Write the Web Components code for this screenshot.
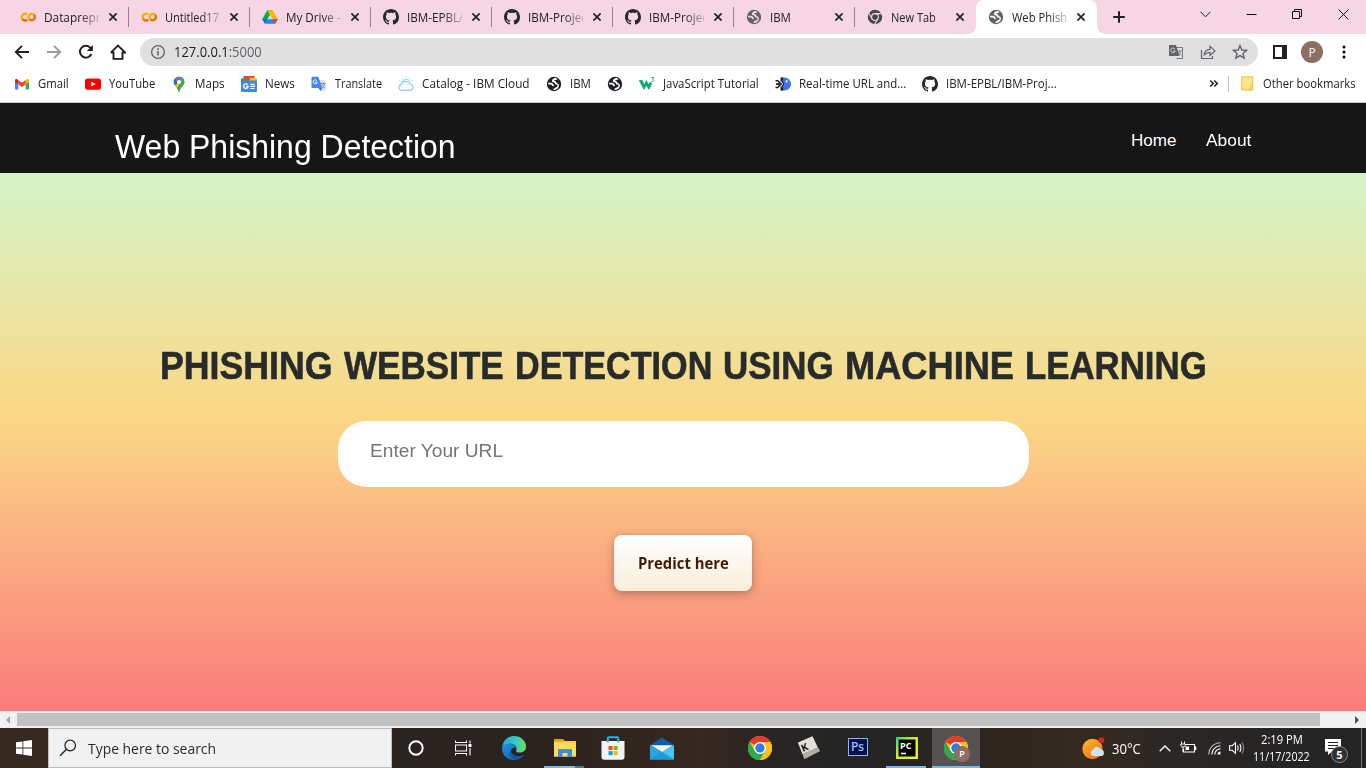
<!DOCTYPE html>
<html lang="en">
<head>
<meta charset="utf-8">
<title>Web Phishing Detection</title>
<style>
html,body{margin:0;height:100%;overflow:hidden}
body{font-family:"Open Sans","Noto Sans",sans-serif;font-size:12px;color:#202124;background:#fff}
</style>
</head>
<body>
<desktop-screen></desktop-screen>
<script>
const chromeLogo = `<circle cx="12" cy="12" r="12" fill="#fbc116"/><path d="M12 12L1.6 6A12 12 0 0 1 22.4 6z" fill="#e33b2e"/><path d="M1.6 6A12 12 0 0 0 12 24L17.2 15 12 12 6.8 15z" fill="#2da94f"/><path d="M22.4 6A12 12 0 0 1 12 24L17.2 15 12 6z" fill="#fbc116"/><circle cx="12" cy="12" r="6" fill="#fff"/><circle cx="12" cy="12" r="4.7" fill="#2f7de9"/>`;
const globe = c => `<circle cx="8" cy="8" r="7.200" fill="${c}"/><path d="M9.800 1.800C7.600 2 5.600 3.700 5.900 5.200 6.200 6.500 7.900 6 8.600 6.700 9.200 7.500 8.600 8.300 9.600 8.500 11 8.600 11.800 8.900 11.500 10 11 11.500 8.500 11.500 7 13.600L8.300 14.100C11 13.500 12.300 12 12.900 10.200 13.200 8.500 12.300 7.400 11 7.200 10.200 6.800 10.600 6 9.800 5.400 9.200 5 8.100 5 8.200 4.500 8.500 3.800 10.300 3.900 11.500 3.400z" fill="var(--hole,#fff)"/><path d="M2.200 7.600H4.800C6.300 7.800 7.100 8.900 6.900 10.100" fill="none" stroke="var(--hole,#fff)" stroke-width="1.800"/>`;
const ICONS = {
colab:['0 0 16 16',`<g fill="none" stroke-width="2.2"><path d="M7.2 5.4A3.3 3.3 0 1 0 7.2 10.6" stroke="#f9ab00"/><circle cx="11.7" cy="8" r="3.2" stroke="#f9ab00"/><path d="M9.4 10.3A3.2 3.2 0 0 0 14 5.7" stroke="#e8710a"/><path d="M2.2 10.2A3.3 3.3 0 0 0 7.2 10.6" stroke="#e8710a"/></g>`],
drive:['0 0 16 16',`<path d="M5.4 1.3h5.2L8 5.8z" fill="#188038"/><path d="M5.4 1.3L8 5.8 3 14.4.2 10.3z" fill="#00ac47"/><path d="M10.6 1.3l5.2 9h-5.2L5.4 1.3z" fill="#ffba00"/><path d="M5.4 10.3h10.4L13 14.7H3z" fill="#2684fc"/><path d="M.2 10.3h5.2L3 14.7z" fill="#1967d2"/><path d="M10.6 10.3h5.2L13 14.7z" fill="#ea4335"/>`],
github:['0 0 16 16',`<path fill="#24292f" d="M8 0C3.58 0 0 3.58 0 8c0 3.54 2.29 6.53 5.47 7.59.4.07.55-.17.55-.38 0-.19-.01-.82-.01-1.49-2.01.37-2.53-.49-2.69-.94-.09-.23-.48-.94-.82-1.13-.28-.15-.68-.52-.01-.53.63-.01 1.08.58 1.23.82.72 1.21 1.87.87 2.33.66.07-.52.28-.87.51-1.07-1.78-.2-3.64-.89-3.64-3.95 0-.87.31-1.59.82-2.15-.08-.2-.36-1.02.08-2.12 0 0 .67-.21 2.2.82.64-.18 1.32-.27 2-.27.68 0 1.36.09 2 .27 1.53-1.04 2.2-.82 2.2-.82.44 1.1.16 1.92.08 2.12.51.56.82 1.27.82 2.15 0 3.07-1.87 3.75-3.65 3.95.29.25.54.73.54 1.48 0 1.07-.01 1.93-.01 2.2 0 .21.15.46.55.38A8.012 8.012 0 0 0 16 8c0-4.42-3.58-8-8-8z"/>`],
globe:['0 0 16 16',globe('#5f6368')],
globedark:['0 0 16 16',globe('#202124')],
newtab:['0 0 16 16',`<circle cx="8" cy="8" r="7.200" fill="#44474c"/><g stroke="#f6d5e4" stroke-width="1.100" fill="none"><circle cx="8" cy="8" r="3.400"/><path d="M8 4.600H14.400M5.100 9.800L1.800 4.300M11 9.700L7.600 15.200"/></g>`],
close:['0 0 8 8',`<path d="M.4.4l7.2 7.2M7.6.4L.4 7.6" stroke="#202124" stroke-width="1.700"/>`],
plus:['0 0 12 12',`<path d="M6 .2v11.6M.2 6h11.6" stroke="#202124" stroke-width="2"/>`],
chev:['0 0 11 11',`<path d="M.5 2.8l5 5 5-5" fill="none" stroke="#202124" stroke-width="1"/>`],
min:['0 0 11 11',`<path d="M.5 5.5h10" stroke="#111"/>`],
restore:['0 0 11 11',`<path d="M.5 2.5h7v7h-7zM2.5 2.5V.5h7v7h-2" fill="none" stroke="#111"/>`],
wclose:['0 0 11 11',`<path d="M.5.5l10 10M10.500.5l-10 10" stroke="#111"/>`],
back:['0 0 16 16',`<path d="M15 8H2M8 1.800L1.800 8 8 14.200" fill="none" stroke="#202124" stroke-width="1.900"/>`],
fwd:['0 0 16 16',`<path d="M1 8h13M8 1.800L14.200 8 8 14.200" fill="none" stroke="#9b9da0" stroke-width="1.900"/>`],
reload:['0 0 16 16',`<path d="M13.300 10A5.900 5.900 0 1 1 12.600 4.200" fill="none" stroke="#202124" stroke-width="2"/><path d="M14.900 1v6H8.900z" fill="#202124"/>`],
home:['0 0 16 16',`<path d="M3.500 7.500V14.900H12.500V7.500M.8 8.600L8 1.500 15.200 8.600H12.500M.8 8.600H3.500" fill="none" stroke="#202124" stroke-width="1.900"/>`],
info:['0 0 16 16',`<circle cx="8" cy="8" r="6.400" fill="none" stroke="#5f6368" stroke-width="1.300"/><path d="M8 7v4.600M8 4.300v1.600" stroke="#5f6368" stroke-width="1.600"/>`],
gtrans:['0 0 16 16',`<path d="M6.500 3.500H14.500V14.500H8.500" fill="#e0e0e0" stroke="#777a7e"/><path d="M1 1h7l3.500 11H1z" fill="#5f6368"/><path d="M7 5.100A2.300 2.300 0 1 0 7.200 7H5.200" fill="none" stroke="#e0e0e0"/><path d="M9.500 7h4.500M11.500 6v1M13 7.200C12.500 9 11.500 10 10.500 11M10.500 8c.5 1.400 1.800 2.500 3 3.300" stroke="#777a7e" fill="none" stroke-width=".9"/>`],
share:['0 0 16 16',`<path d="M1.500 6V14.500H12.500V12M4.200 10.800C4.600 7.400 6.600 5.600 10 5.400V2.300L15 6.900 10 11.300V8.300C7.500 8.300 5.800 9.100 4.200 10.800z" fill="none" stroke="#5f6368" stroke-width="1.200"/>`],
star:['0 0 16 16',`<path d="M8 1.700L9.900 6 14.500 6.400 11 9.500 12.100 14 8 11.600 3.900 14 5 9.500 1.500 6.400 6.100 6z" fill="none" stroke="#5f6368" stroke-width="1.400"/>`],
side:['0 0 14 14',`<path d="M1 1h12v12H1z" fill="none" stroke="#202124" stroke-width="2"/><path d="M9 0h5v14H9z" fill="#202124"/>`],
dots:['0 0 4 14',`<circle cx="2" cy="2" r="1.500"/><circle cx="2" cy="7" r="1.500"/><circle cx="2" cy="12" r="1.500"/>`],
gmail:['0 0 16 16',`<path d="M1 4v8.500q0 1 1 1H4.300V7z" fill="#4285f4"/><path d="M15 4v8.500q0 1-1 1H11.700V7z" fill="#34a853"/><path d="M1 4.300Q1 2.700 2.800 3L4.300 4V8.300L1 5.800z" fill="#c5221f"/><path d="M15 4.300Q15 2.700 13.200 3L11.700 4V8.300L15 5.800z" fill="#fbbc04"/><path d="M4.300 4L8 6.800 11.700 4V8.300L8 11 4.300 8.300z" fill="#ea4335"/>`],
youtube:['0 0 16 16',`<rect x="0" y="2.500" width="16" height="11.200" rx="2.800" fill="#f00"/><path d="M6.400 5.700v4.800l4.200-2.400z" fill="#fff"/>`],
maps:['0 0 16 16',`<path d="M2.700 6A5.300 5.300 0 0 1 13.300 6C13.300 9.500 9.500 10.800 8.600 15.200Q8 16.400 7.400 15.200C6.500 10.800 2.700 9.500 2.700 6z" fill="#34a853"/><path d="M3.900 9.500L11.800.7Q14 3 13.300 6.500L7.600 13.400z" fill="#fbbc04"/><path d="M3.900 9.500Q2.300 7.500 2.800 4.500L4 2.500 8 6z" fill="#1a73e8"/><path d="M3.300 3.200Q5.500.2 8 .7L6.500 5.500z" fill="#ea4335"/><path d="M7.500.7H8Q10.800.7 12.200 2.700L9 6.300 6 4.500z" fill="#4285f4"/><path d="M12.200 2.700Q14 5 13 7.800 12 10 10 11.500 9 13 8.500 15.300 8 16.200 7.500 15.300 7.200 13 6.300 11.800z" fill="#34a853"/><circle cx="8" cy="6" r="2" fill="#fff"/>`],
news:['0 0 16 16',`<path d="M0 3l6-1.500L7 6H0z" fill="#34a853"/><path d="M2.500 0h11v5h-11z" fill="#ea4335"/><path d="M0 2.500L4 2v4H0z" fill="#34a853"/><path d="M9 1.200l7 1.500V6H8z" fill="#fbbc04"/><rect y="4.500" width="16" height="11.500" rx="1" fill="#4285f4"/><path d="M6.700 8.700A2.300 2.300 0 1 0 7.200 10.500H5" fill="none" stroke="#fff" stroke-width="1.300"/><path d="M9.300 8.300h4.200M9.300 10.400h4.700M9.300 12.500h4.200" stroke="#fff" stroke-width="1.200"/>`],
translate:['0 0 16 16',`<path d="M6 4h8q1 0 1 1v9q0 1-1 1H9.500z" fill="#dfe1e5"/><path d="M1.500.8h5.800L11.300 12H1.500q-1 0-1-1V1.800q0-1 1-1z" fill="#4285f4"/><path d="M7.500 12h3.800L9.500 15z" fill="#3367d6"/><path d="M5.800 4.600A2 2 0 1 0 6.200 6.200H4.300" fill="none" stroke="#fff"/><path d="M10 7.500h4.500M12 6.500v1M13.500 7.800C13 10 12 11 11 12M11 8.500c.5 1.500 1.800 2.800 3 3.500" stroke="#80868b" fill="none" stroke-width=".9"/>`],
cloud:['0 0 16 16',`<path d="M3.400 14.300A2.800 2.800 0 0 1 2.600 8.900 5.200 5.200 0 0 1 12 7.800 3.300 3.300 0 0 1 12.300 14.300z" fill="#f5fbff" stroke="#9fc5fb" stroke-width="1.200"/><path d="M3.700 6.200Q5 3.200 8 3.200T12 6M8 .3v1.400M4.300 1.500l.8 1.200M11.600 1.500l-.8 1.200M1.300 4.500l1.300.7M14.600 4.500l-1.300.7" stroke="#7be0f5" fill="none"/>`],
w3:['0 0 16 16',`<path d="M.3 4.500H3.200L5.300 9.300 7.300 4.500 9.600 9.300 10.800 6.500 12.600 7 10.200 13.300 7.200 9 5 13.300z" fill="#04aa6d" stroke="#04aa6d" stroke-width=".8"/><path d="M12.400 1.500h2.500l-1.300 1.700q1.400.2 1.400 1.300 0 1.300-2.700.9" fill="none" stroke="#04aa6d" stroke-width=".8"/>`],
fish:['0 0 16 16',`<path d="M6 1.500H9.500A6.400 6.400 0 0 1 9.500 14.500H6z" fill="#3d73ee"/><path d="M5.500 1.500h2.600v3H6.800L8.800 6.800v2.400L6.800 11.500H8.100v3H5.500z" fill="#202124"/><path d="M.5 4.800H2.800L4.800 7V9.200L2.800 11.500H.5M1 8.100H5" fill="none" stroke="#202124" stroke-width="1.600"/><path d="M5.800 5.200L7.500 8 5.800 10.900" fill="none" stroke="#fff" stroke-width=".9"/><circle cx="11.700" cy="5.300" r="1.100" fill="#fff"/>`],
folder:['0 0 13 15',`<path d="M.8.8h10.900v13H.8z" fill="#ffe591" stroke="#edc84b" stroke-width="1.200"/><path d="M10 9.500q0-1 1.200 0V14H9z" fill="#ffe591" stroke="#edc84b"/>`],
more:['0 0 10 9',`<path d="M1.300 1.500l3 3-3 3M5.300 1.500l3 3-3 3" fill="none" stroke="#202124" stroke-width="1.600"/>`],
tril:['0 0 4 8',`<path d="M4 0v8L0 4z" fill="#a3a3a3"/>`],
trir:['0 0 4 8',`<path d="M0 0v8l4-4z" fill="#505050"/>`],
win:['0 0 16 16',`<path d="M0 2.300l6.500-.9v6.200H0zM7.300 1.200L16 0v7.600H7.300zM0 8.400h6.500v6.200L0 13.700zM7.300 8.400H16V16l-8.700-1.200z" fill="#fff"/>`],
search:['0 0 18 18',`<circle cx="11.200" cy="6.500" r="5.300" fill="none" stroke="#222" stroke-width="1.200"/><path d="M7.500 10.300L1 16.800" stroke="#222" stroke-width="1.400"/>`],
cortana:['0 0 16 16',`<circle cx="8" cy="8" r="6.700" fill="none" stroke="#fff" stroke-width="1.900"/>`],
tasks:['0 0 17 16',`<path d="M.5.500V2.500H11.500V.5M.5 15.500V13.500H11.500V15.500M.5 5h11v6H.5zM15 .5v3M15 8v7.500" fill="none" stroke="#fff" stroke-width="1.100"/><path d="M13.500 4h3v3h-3z" fill="#fff"/>`],
edge:['0 0 24 24',`<defs><linearGradient id="a" x1="0" y1=".4" x2="1" y2=".5"><stop stop-color="#2aaae0"/><stop offset=".55" stop-color="#36c8c4"/><stop offset="1" stop-color="#6fe05a"/></linearGradient><linearGradient id="b" x2="1" y2="1"><stop stop-color="#1b9be2"/><stop offset="1" stop-color="#0b54a8"/></linearGradient></defs><path d="M.2 11C1 4.500 6 0 12 0c7 0 12 5 12 10.500 0 4-3 6-6.500 6-2.500 0-3.700-1-3.300-2C15.500 11 13 8 9 7.800 5 7.600 1.500 9 .2 11z" fill="url(#a)"/><path d="M.1 11.500C2 8.200 6 7.400 9.500 8c3 .5 4.500 2.500 4.500 4-3.500-1-5.500 1.500-5 4.500.7 3.500 5 5.500 12.700 2.500C19.500 22 16 24 12 24 5 24-.4 18.500.1 11.500z" fill="url(#b)"/><path d="M9 13.500C6 18 9 23 13.500 23.700c3.800-.5 6.500-2.500 8.300-4.800C15 22 9 19 9 13.500z" fill="#0c59a4"/>`],
explorer:['0 0 22 18',`<path d="M0 0h9l1.500 2H22v15.500H0z" fill="#f9c846"/><path d="M0 0h9v2.500H0z" fill="#e2a100"/><path d="M0 3.500h22v14H0z" fill="#ffd966"/><path d="M4 18v-7q0-1 1-1H17q1 0 1 1v7h-4.500v-4h-5v4z" fill="#3b8fd8"/>`],
store:['0 0 24 24',`<path d="M6.800 6V2q0-.8.8-.8h8.800q.8 0 .8.8V6" fill="none" stroke="#2bb0ea" stroke-width="2"/><path d="M.5 5h23v16q0 2.800-2.800 2.800H3.300Q.5 23.800.5 21z" fill="#f3f3f3"/><path d="M6.800 4V6.500M17.200 4V6.500" stroke="#2bb0ea" stroke-width="2"/><path d="M7.500 10H11.600v4.100H7.500z" fill="#f25022"/><path d="M12.600 10h4.100v4.100h-4.100z" fill="#7fba00"/><path d="M7.500 15.100h4.100v4.100H7.500z" fill="#00a4ef"/><path d="M12.600 15.100h4.100v4.100h-4.100z" fill="#ffb900"/>`],
mail:['0 0 24 23',`<path d="M0 8.300L12 .5 24 8.300V12H0z" fill="#0f5ca8"/><path d="M0 8.300L12 15 24 8.300V22.500H0z" fill="#2aa5e4"/><path d="M12 15L24 8.300V22.500z" fill="#48c5f3"/><path d="M0 22.500L12 15l12 7.500z" fill="#1c9be0"/><path d="M1 8.300h22L12 15z" fill="#f4f4f4"/>`],
chrome:['0 0 24 24',chromeLogo],
battery:['0 0 17 14',`<path d="M5.500 3.500H14.500v7.500H3.500V8M15.700 5.500v3.500" fill="none" stroke="#fff" stroke-width="1.200"/><path d="M5.500 5.500h3.500v3.500H5.500z" fill="#fff"/><path d="M1.500.5v2.500M4.500.5v2.500M.8 3h4.500v1.500Q5 6 3 6T.8 4.500zM3 6v5" fill="none" stroke="#fff"/>`],
wifi:['0 0 13 13',`<g fill="none" stroke="#fff" stroke-width="1.100"><path d="M.8 12.500A11.700 11.700 0 0 1 12.500.8" opacity=".7"/><path d="M3.800 12.500A8.700 8.700 0 0 1 12.500 3.800"/><path d="M6.800 12.500A5.700 5.700 0 0 1 12.500 6.800"/></g><path d="M9.500 12.500a3 3 0 0 1 3-3v3z" fill="#fff"/>`],
speaker:['0 0 16 14',`<path d="M.6 4.700h2.600L6.500 1.700v10.600L3.200 9.300H.6zM8.500 4.500Q10 7 8.500 9.500M10.800 3Q13 7 10.800 11" fill="none" stroke="#fff" stroke-width="1.100"/><path d="M13 1.500Q16.300 7 13 12.500" fill="none" stroke="#8a8785" stroke-width="1.100"/>`],
up:['0 0 12 7',`<path d="M.7 6.300L6 1l5.300 5.300" fill="none" stroke="#fff" stroke-width="1.300"/>`],
weather:['0 0 23 23',`<defs><linearGradient id="s" x2=".6" y2="1"><stop stop-color="#fcb827"/><stop offset="1" stop-color="#f0791d"/></linearGradient></defs><circle cx="10.500" cy="12" r="10.200" fill="url(#s)"/><path d="M11.500 19a3 3 0 0 1-.5-5.900 4.200 4.200 0 0 1 8-.5 3.300 3.300 0 0 1 .8 6.400z" fill="#cfe2fb"/><circle cx="19.300" cy="3.200" r="3" fill="#c42b1c"/>`],
note:['0 0 16 16',`<path d="M0 0h16v12.500H7L3 16v-3.500H0z" fill="#fff"/><path d="M3 3.500h10M3 6.500h10M3 9.500h7" stroke="#222" stroke-width="1.100"/>`],
keyk:['0 0 24 24',`<path d="M1 7L15.500.5 23 15 7.500 23z" fill="#8d8880"/><path d="M1 6.500L15.500.3 20.500 11.500 5.500 18z" fill="#e6e1d8"/><path d="M20.500 11.500L23 15 7.500 23 5.500 18z" fill="#b2aca2"/>`],
pc:['0 0 22 22',`<defs><linearGradient id="p" x2="1" y2="1"><stop stop-color="#21d789"/><stop offset=".4" stop-color="#c9ea2c"/><stop offset="1" stop-color="#f6ee29"/></linearGradient></defs><path d="M0 0h22v22H0z" fill="url(#p)"/><path d="M2.500 2.500h17v17h-17z" fill="#060606"/><path d="M5 16.500h5" stroke="#fff" stroke-width="1.600"/>`]
};
const make = (name, html, init) => customElements.define(name, class extends HTMLElement {
  connectedCallback(){
    if(this.shadowRoot) return;
    this.attachShadow({mode:'open'}).innerHTML = typeof html==='function' ? html(this) : html;
    if(init) init(this);
  }
});

make('desktop-screen', `<style>:host{display:grid;grid-template-rows:34px 36px 33px 608px 17px 40px;width:1366px;height:768px;overflow:hidden}</style>
<tab-strip></tab-strip><tool-bar></tool-bar><bookmark-bar></bookmark-bar><phishing-page></phishing-page><scroll-bar></scroll-bar><task-bar></task-bar>`);

make('tab-strip', `<style>:host{display:flex;background:#f6d5e4;padding-left:8px;box-sizing:border-box;height:34px}
.add{margin-left:16px;align-self:center;margin-right:75px}
.ctl{display:flex;gap:35px;margin-top:9px}</style>
<browser-tab icon="colab" w="64">Dataprepro</browser-tab><browser-tab icon="colab" w="60">Untitled17.i</browser-tab><browser-tab icon="drive" w="66">My Drive - G</browser-tab><browser-tab icon="github" w="67">IBM-EPBL/IB</browser-tab><browser-tab icon="github" w="63">IBM-Project</browser-tab><browser-tab icon="github" w="63">IBM-Project</browser-tab><browser-tab icon="globe" w="21">IBM</browser-tab><browser-tab icon="newtab" w="45" last>New Tab</browser-tab><browser-tab icon="globe" w="58" active>Web Phishi</browser-tab>
<ui-icon class="add" name="plus" w="12" h="12"></ui-icon>
<div class="ctl"><ui-icon name="chev" w="11" h="11"></ui-icon><ui-icon name="min" w="11" h="11"></ui-icon><ui-icon name="restore" w="11" h="11"></ui-icon><ui-icon name="wclose" w="11" h="11"></ui-icon></div>`);

make('browser-tab', e=>`<style>:host{display:flex;align-items:center;width:121px;height:34px;box-sizing:border-box;padding-left:12px;position:relative;--hole:#f6d5e4}
:host([active]){background:#fff;border-radius:8px 8px 0 0;--hole:#fff}
:host([active])::before,:host([active])::after{content:"";position:absolute;bottom:0;width:8px;height:8px}
:host([active])::before{left:-8px;background:radial-gradient(circle at 0 0,transparent 7.500px,#fff 8px)}
:host([active])::after{right:-8px;background:radial-gradient(circle at 100% 0,transparent 7.500px,#fff 8px)}
.t{width:58px;margin:0 8px;overflow:hidden;-webkit-mask:linear-gradient(90deg,#000 36px,transparent 60px)}
:host([icon=globe]:not([active])) .t,:host([icon=newtab]) .t{-webkit-mask:none}
.x{margin-left:2px}
:host([active]) .x{margin-left:1px}
i{width:1px;height:20px;background:#94808a;margin-left:11px}
:host([last]) i,:host([active]) i{visibility:hidden}</style>
<ui-icon name="${e.getAttribute('icon')}" w="16" h="16"></ui-icon><div class="t"><ui-text w="${e.getAttribute('w')}"><slot></slot></ui-text></div><ui-icon class="x" name="close" w="8" h="8"></ui-icon><i></i>`);

make('tool-bar', `<style>:host{display:flex;align-items:center;height:36px;background:#fff;padding-left:14px;box-sizing:border-box}
.nav{display:flex;gap:16px;width:126px}
.omni{display:flex;align-items:center;box-sizing:border-box;width:1118px;height:28px;border-radius:14px;background:#e0e0e0;padding:0 10px;font-size:14px}
.omni ui-text{margin:-1px 0 0 8px}.omni b{font-weight:400;color:#5f6368}
.acts{display:flex;gap:16px;margin-left:auto}
.side{margin-left:15px}.av{width:22px;height:22px;border-radius:50%;background:#8d6e63;color:#fff;display:grid;place-items:center;margin:0 19px 0 14px;font-size:12px}</style>
<div class="nav"><ui-icon name="back" w="16" h="16"></ui-icon><ui-icon name="fwd" w="16" h="16"></ui-icon><ui-icon name="reload" w="16" h="16"></ui-icon><ui-icon name="home" w="16" h="16"></ui-icon></div>
<div class="omni"><ui-icon name="info" w="16" h="16"></ui-icon><ui-text w="88">127.0.0.1<b>:5000</b></ui-text><div class="acts"><ui-icon name="gtrans" w="16" h="16"></ui-icon><ui-icon name="share" w="16" h="16"></ui-icon><ui-icon name="star" w="16" h="16"></ui-icon></div></div>
<ui-icon class="side" name="side" w="14" h="14"></ui-icon><div class="av">P</div><ui-icon name="dots" w="4" h="14"></ui-icon>`);

make('bookmark-bar', `<style>:host{display:flex;align-items:center;gap:16px;height:33px;box-sizing:border-box;padding:0 10px 5px 14px;border-bottom:1px solid #c9c9c9;background:#fff;--hole:#fff}
.r{display:flex;align-items:center;margin-left:auto}.r i{width:1px;height:16px;background:#c4c4c4;margin:0 12px 0 9px}.r ui-text{margin-left:9px}</style>
<book-mark icon="gmail" w="31">Gmail</book-mark><book-mark icon="youtube" w="46">YouTube</book-mark><book-mark icon="maps" w="30">Maps</book-mark><book-mark icon="news" w="30">News</book-mark><book-mark icon="translate" w="47">Translate</book-mark><book-mark icon="cloud" w="108">Catalog - IBM Cloud</book-mark><book-mark icon="globedark" w="21">IBM</book-mark><ui-icon name="globedark" w="16" h="16"></ui-icon><book-mark icon="w3" w="96">JavaScript Tutorial</book-mark><book-mark icon="fish" w="107">Real-time URL and...</book-mark><book-mark icon="github" w="111">IBM-EPBL/IBM-Proj...</book-mark>
<div class="r"><ui-icon name="more" w="10" h="9"></ui-icon><i></i><ui-icon name="folder" w="13" h="15"></ui-icon><ui-text w="93">Other bookmarks</ui-text></div>`);

make('book-mark', e=>`<style>:host{display:flex;align-items:center;gap:8px}</style><ui-icon name="${e.getAttribute('icon')}" w="16" h="16"></ui-icon><ui-text w="${e.getAttribute('w')}"><slot></slot></ui-text>`);

make('phishing-page', `<style>:host{display:flex;flex-direction:column;height:608px;font-family:"Liberation Sans",Arial,sans-serif}
nav{display:flex;box-sizing:border-box;height:70px;background:#161616;color:#fff;padding:25px 115px 0;justify-content:space-between;font-size:17px;line-height:24px}
.brand{font-size:33px;line-height:38px}.links{display:flex;gap:30px;padding-top:1px}
main{flex:1;display:flex;flex-direction:column;align-items:center;background:linear-gradient(#d4f5c9 0,#fbd784 243px,#fbd586 253px,#fa7b7b 538px)}
h1{display:flex;gap:11px;margin:168px 0 0;font-size:39px;line-height:50px;color:#272b2b;font-weight:700;-webkit-text-stroke:.6px #272b2b}
.in{box-sizing:border-box;width:691px;height:66px;margin-top:30px;border-radius:28px;background:#fff;padding:18px 32px;font-size:19px;line-height:24px;color:#757575}
button{display:grid;place-items:center;margin-top:48px;width:138px;height:56px;border:0;padding:0;border-radius:8px;background:linear-gradient(#fff,#f8eedb);box-shadow:0 4px 11px rgba(37,44,97,.15),0 1px 3px rgba(93,100,148,.2),0 2px 8px rgba(170,80,40,.3);color:#451a03;font:700 15.500px "Open Sans","Noto Sans",sans-serif}</style>
<nav><ui-text class="brand" w="341">Web Phishing Detection</ui-text><div class="links"><ui-text w="45">Home</ui-text><ui-text w="45">About</ui-text></div></nav>
<main><h1><ui-text w="173">PHISHING</ui-text> <ui-text w="160">WEBSITE</ui-text> <ui-text w="197">DETECTION</ui-text> <ui-text w="111">USING</ui-text> <ui-text w="169">MACHINE</ui-text> <ui-text w="182">LEARNING</ui-text></h1><div class="in"><ui-text w="133">Enter Your URL</ui-text></div><button><ui-text w="91">Predict here</ui-text></button></main>`);

make('scroll-bar', `<style>:host{display:flex;align-items:center;height:17px;box-sizing:border-box;background:#f1f1f1;padding:0 7px 0 6px}i{width:1303px;height:13px;background:#c1c1c1;margin:0 35px 0 7px}</style><ui-icon name="tril" w="4" h="8"></ui-icon><i></i><ui-icon name="trir" w="4" h="8"></ui-icon>`);

make('task-bar', `<style>:host{display:flex;height:40px;color:#fff;background:linear-gradient(90deg,#352920 0,#352920 48px,#292320 400px,#2c231f 550px,#36271f 700px,#282625 770px,#242424 880px,#30261f 1010px,#35291f 1080px,#2a2725 1180px,#232323 1366px)}
.start{width:48px;display:grid;place-items:center}
.search{box-sizing:border-box;width:344px;border:1px solid #bdbdbd;background:#f1f1f1;color:#2b2b2b;font-size:15px;display:flex;align-items:center;padding-left:10px;gap:11px}
.slots{display:grid;grid-template-columns:48px 47px 54px 47px 50px 48px 50px 48px 49px 49px 50px 49px}
.tray{display:grid;grid-template-columns:23px 7px 29px 18px 12px 9px 17px 11px 13px 8px 17px 7px 57px 15px 27px;margin-left:101px;align-items:center;align-content:center;font-size:14px}
.tray>*{grid-row:1}.clock{font-size:12px;display:flex;flex-direction:column;align-items:center;line-height:17px;margin-top:-1px}
.n{position:relative;height:18px}.n b{position:absolute;left:6px;top:7px;width:15px;height:15px;border:1px solid #8a8a8a;border-radius:50%;background:#303030;font-size:11px;line-height:15px;text-align:center}
.end{width:1px;background:#777;margin-left:auto;margin-right:4px}</style>
<div class="start"><ui-icon name="win" w="16" h="16"></ui-icon></div>
<div class="search"><ui-icon name="search" w="18" h="18"></ui-icon><ui-text w="128">Type here to search</ui-text></div>
<div class="slots"><task-slot icon="cortana" w="16" h="16"></task-slot><task-slot icon="tasks" w="17" h="16"></task-slot><task-slot icon="edge" w="24" h="24"></task-slot><task-slot icon="explorer" w="22" h="18" run split></task-slot><task-slot icon="store" w="24" h="24"></task-slot><task-slot icon="mail" w="24" h="23"></task-slot><span></span><task-slot icon="chrome" w="24" h="24"></task-slot><task-slot icon="keyk" w="24" h="24" mark="k"></task-slot><task-slot mark="ps">Ps</task-slot><task-slot icon="pc" w="22" h="22" mark="pc" run></task-slot><task-slot icon="chrome" w="24" h="24" mark="p" on></task-slot></div>
<div class="tray"><ui-icon style="grid-column:1" name="weather" w="23" h="23"></ui-icon><ui-text style="grid-column:3" w="29">30°C</ui-text><ui-icon style="grid-column:5" name="up" w="12" h="7"></ui-icon><ui-icon style="grid-column:7" name="battery" w="17" h="14"></ui-icon><ui-icon style="grid-column:9" name="wifi" w="13" h="13"></ui-icon><ui-icon style="grid-column:11" name="speaker" w="16" h="14"></ui-icon><div class="clock" style="grid-column:13"><ui-text w="42">2:19 PM</ui-text><ui-text w="57">11/17/2022</ui-text></div><div class="n" style="grid-column:15"><ui-icon name="note" w="16" h="16"></ui-icon><b>5</b></div></div>
<div class="end"></div>`);

make('task-slot', e=>{const m=e.getAttribute('mark');return `<style>:host{display:grid;place-items:center;position:relative;height:40px}
:host([on]){background:#555251;width:48px}
:host([run])::after,:host([on])::after{content:"";position:absolute;bottom:0;left:4px;width:40px;height:2px;background:#76b9ed}
:host([on])::after{left:0;width:48px}
:host([split])::after{left:3px;background:linear-gradient(90deg,#76b9ed 31px,#4c7596 31px)}
.k,.pc,.p{position:absolute;font-weight:700;line-height:1}
.k{color:#111;font-size:10px;left:17px;top:14px;transform:rotate(-24deg)}
.pc{font-size:9px;left:18px;top:13px;color:#fff}
.p{left:22px;top:18px;width:16px;height:16px;border-radius:50%;background:#8d6e63;color:#fff;font-weight:600;font-size:9px;line-height:16px;text-align:center}
.ps{width:18px;height:16px;border:1.500px solid #7fb8f5;background:#0c0c4a;color:#8bc3fb;font:600 12px/16px "Open Sans",sans-serif;text-align:center;margin-bottom:3px}</style>
${m==='ps'?'<div class="ps"><slot></slot></div>':`<ui-icon name="${e.getAttribute('icon')}" w="${e.getAttribute('w')}" h="${e.getAttribute('h')}"></ui-icon>`}${m==='k'?'<span class="k">K</span>':m==='pc'?'<span class="pc">PC</span>':m==='p'?'<span class="p">P</span>':''}`});

make('ui-icon', e=>{const [v,s]=ICONS[e.getAttribute('name')],w=e.getAttribute('w'),h=e.getAttribute('h');return `<style>:host{display:block;flex:none;width:${w}px;height:${h}px}svg{display:block}</style><svg width="${w}" height="${h}" viewBox="${v}">${s}</svg>`});

/* Text run condensed or widened horizontally to an exact advance width. */
make('ui-text', e=>`<style>:host{display:block;flex:none;width:${e.getAttribute('w')}px;white-space:nowrap;text-align:left}span{display:inline-block;transform-origin:0 50%}</style><span><slot></slot></span>`, e=>{
  const s=e.shadowRoot.querySelector('span');
  s.style.transform=`scaleX(${e.getAttribute('w')/s.offsetWidth})`;
});
</script>
</body>
</html>
